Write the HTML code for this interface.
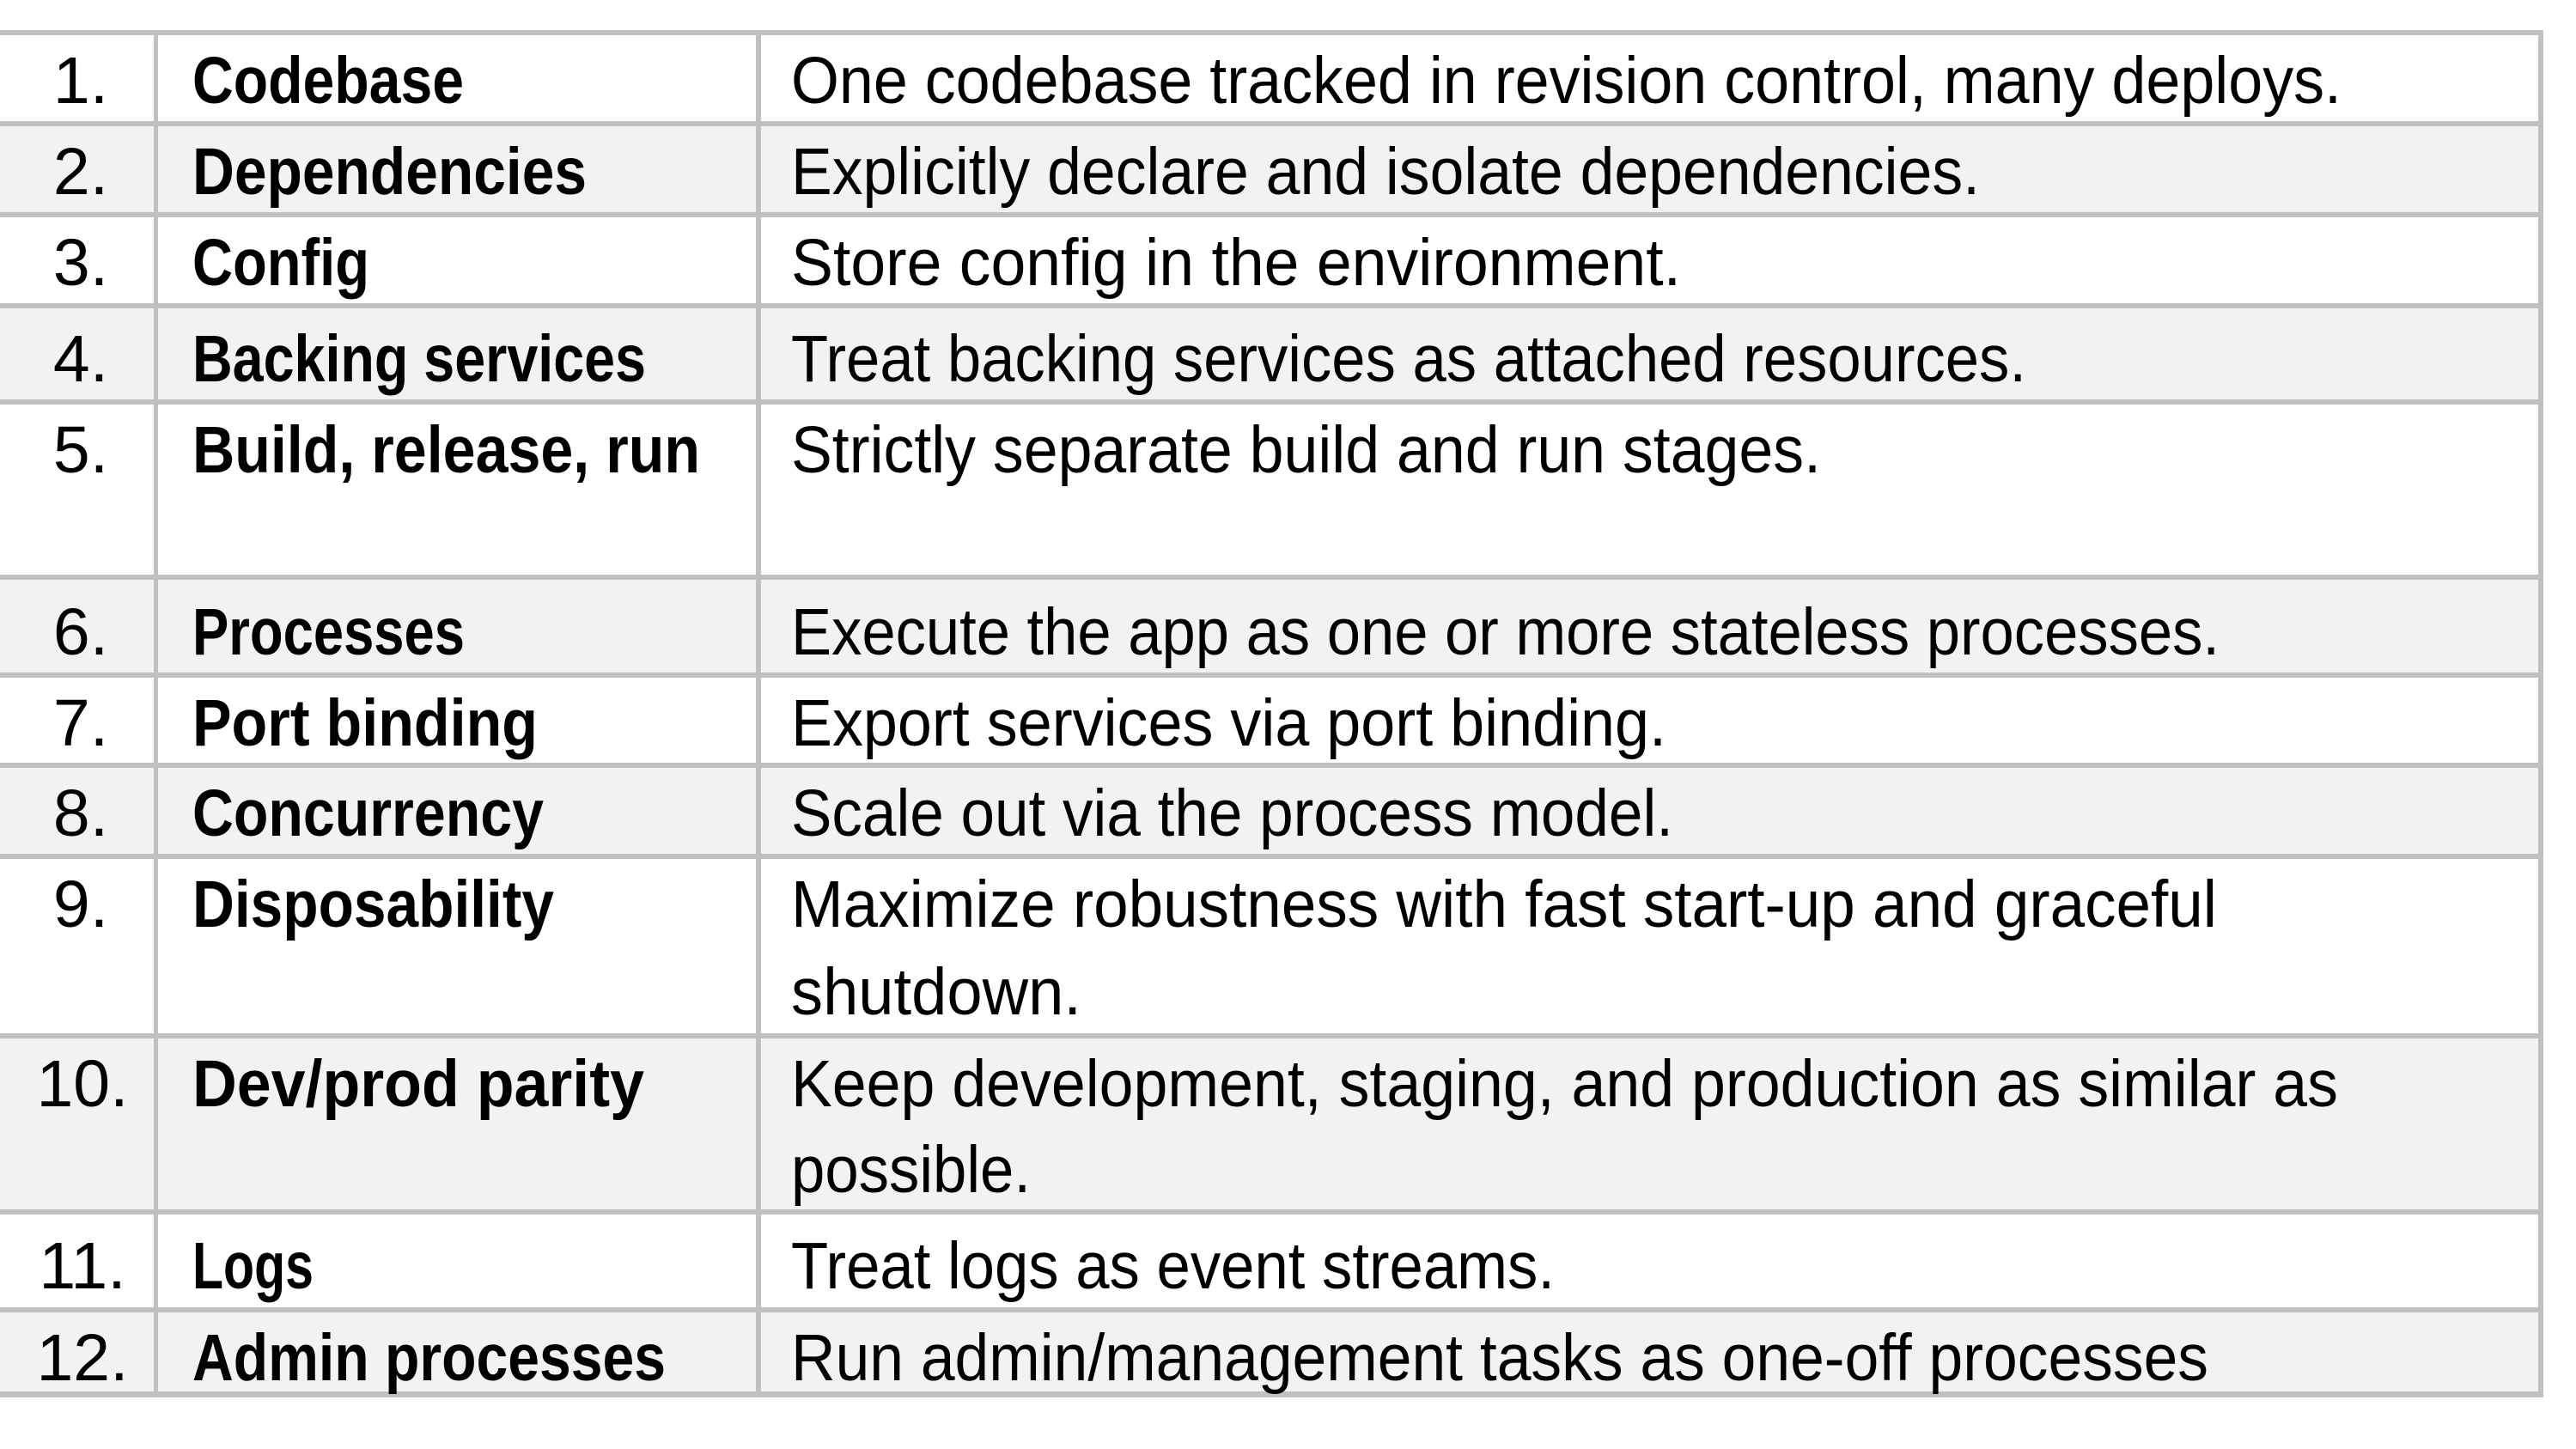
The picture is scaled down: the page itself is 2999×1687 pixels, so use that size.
<!DOCTYPE html>
<html><head><meta charset="utf-8"><style>html,body{margin:0;padding:0;background:#fff;width:2999px;height:1687px;overflow:hidden}</style></head><body>
<svg width="2999" height="1687" viewBox="0 0 2999 1687" xmlns="http://www.w3.org/2000/svg" font-family="Liberation Sans, sans-serif" font-size="77">
<rect width="2999" height="1687" fill="#fff"/>
<rect x="0" y="147" width="2958" height="100" fill="#f2f2f2"/>
<rect x="0" y="359" width="2958" height="106" fill="#f2f2f2"/>
<rect x="0" y="675" width="2958" height="108" fill="#f2f2f2"/>
<rect x="0" y="894" width="2958" height="100" fill="#f2f2f2"/>
<rect x="0" y="1209" width="2958" height="199" fill="#f2f2f2"/>
<rect x="0" y="1528" width="2958" height="92" fill="#f2f2f2"/>
<g fill="#c0c0c0">
<rect x="0" y="35" width="2961" height="6"/>
<rect x="0" y="141" width="2961" height="6"/>
<rect x="0" y="247" width="2961" height="6"/>
<rect x="0" y="353" width="2961" height="6"/>
<rect x="0" y="465" width="2961" height="6"/>
<rect x="0" y="669" width="2961" height="6"/>
<rect x="0" y="783" width="2961" height="6"/>
<rect x="0" y="888" width="2961" height="6"/>
<rect x="0" y="994" width="2961" height="6"/>
<rect x="0" y="1203" width="2961" height="6"/>
<rect x="0" y="1408" width="2961" height="6"/>
<rect x="0" y="1522" width="2961" height="6"/>
<rect x="0" y="1620" width="2961" height="7"/>
<rect x="179" y="35" width="5" height="1592"/>
<rect x="880" y="35" width="6" height="1592"/>
<rect x="2955" y="35" width="6" height="1592"/>
</g>
<g fill="#000" text-anchor="middle">
<text x="94" y="120">1.</text>
<text x="94" y="226">2.</text>
<text x="94" y="332">3.</text>
<text x="94" y="444">4.</text>
<text x="94" y="550">5.</text>
<text x="94" y="762">6.</text>
<text x="94" y="868">7.</text>
<text x="94" y="973">8.</text>
<text x="94" y="1079">9.</text>
<text x="96" y="1288">10.</text>
<text x="96" y="1500">11.</text>
<text x="96" y="1607">12.</text>
</g>
<g fill="#000" font-weight="bold">
<text x="224" y="120" textLength="316" lengthAdjust="spacingAndGlyphs">Codebase</text>
<text x="224" y="226" textLength="459" lengthAdjust="spacingAndGlyphs">Dependencies</text>
<text x="224" y="332" textLength="206" lengthAdjust="spacingAndGlyphs">Config</text>
<text x="224" y="444" textLength="528" lengthAdjust="spacingAndGlyphs">Backing services</text>
<text x="224" y="550" textLength="591" lengthAdjust="spacingAndGlyphs">Build, release, run</text>
<text x="224" y="762" textLength="317" lengthAdjust="spacingAndGlyphs">Processes</text>
<text x="224" y="868" textLength="402" lengthAdjust="spacingAndGlyphs">Port binding</text>
<text x="224" y="973" textLength="409" lengthAdjust="spacingAndGlyphs">Concurrency</text>
<text x="224" y="1079" textLength="421" lengthAdjust="spacingAndGlyphs">Disposability</text>
<text x="224" y="1288" textLength="526" lengthAdjust="spacingAndGlyphs">Dev/prod parity</text>
<text x="224" y="1500" textLength="141" lengthAdjust="spacingAndGlyphs">Logs</text>
<text x="224" y="1607" textLength="551" lengthAdjust="spacingAndGlyphs">Admin processes</text>
</g>
<g fill="#000">
<text x="921" y="120" textLength="1805" lengthAdjust="spacingAndGlyphs">One codebase tracked in revision control, many deploys.</text>
<text x="921" y="226" textLength="1384" lengthAdjust="spacingAndGlyphs">Explicitly declare and isolate dependencies.</text>
<text x="921" y="332" textLength="1036" lengthAdjust="spacingAndGlyphs">Store config in the environment.</text>
<text x="921" y="444" textLength="1438" lengthAdjust="spacingAndGlyphs">Treat backing services as attached resources.</text>
<text x="921" y="550" textLength="1199" lengthAdjust="spacingAndGlyphs">Strictly separate build and run stages.</text>
<text x="921" y="762" textLength="1663" lengthAdjust="spacingAndGlyphs">Execute the app as one or more stateless processes.</text>
<text x="921" y="868" textLength="1019" lengthAdjust="spacingAndGlyphs">Export services via port binding.</text>
<text x="921" y="973" textLength="1027" lengthAdjust="spacingAndGlyphs">Scale out via the process model.</text>
<text x="921" y="1079" textLength="1660" lengthAdjust="spacingAndGlyphs">Maximize robustness with fast start-up and graceful</text>
<text x="921" y="1181" textLength="338" lengthAdjust="spacingAndGlyphs">shutdown.</text>
<text x="921" y="1288" textLength="1801" lengthAdjust="spacingAndGlyphs">Keep development, staging, and production as similar as</text>
<text x="921" y="1388" textLength="279" lengthAdjust="spacingAndGlyphs">possible.</text>
<text x="921" y="1500" textLength="889" lengthAdjust="spacingAndGlyphs">Treat logs as event streams.</text>
<text x="921" y="1607" textLength="1650" lengthAdjust="spacingAndGlyphs">Run admin/management tasks as one-off processes</text>
</g>
</svg>
</body></html>
